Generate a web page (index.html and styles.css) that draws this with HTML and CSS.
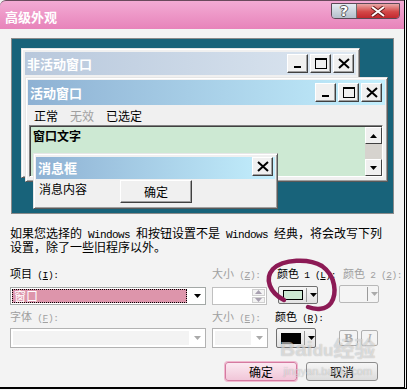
FILE: index.html
```html
<!DOCTYPE html>
<html>
<head>
    <title>高级外观</title>
    <link rel="stylesheet" href="styles.css">
</head>
<body>
<div class="dialog">
    <div class="caption">
        <span class="caption-title">高级外观</span>
        <div class="caption-btns">
            <span class="cap-help">?</span>
            <span class="cap-close">
                <svg width="16" height="11" viewBox="0 0 16 11"><path d="M2 1L14 10M14 1L2 10" stroke="#6b2020" stroke-width="4"/><path d="M2 1L14 10M14 1L2 10" stroke="#fff" stroke-width="2"/></svg>
            </span>
        </div>
    </div>

    <div class="content">
        <div class="preview">
            <div class="win win-inactive">
                <div class="bar bar-inactive">
                    <span>非活动窗口</span>
                    <div class="bar-btns">
                        <span class="cb"><svg width="12" height="11"><rect x="2" y="8" width="7" height="2"/></svg></span>
                        <span class="cb"><svg width="12" height="11"><path d="M0 0h12v11H0z M1 2v8h10V2z" fill-rule="evenodd"/></svg></span>
                        <span class="cb"><svg width="12" height="11"><path d="M1 1L11 10M11 1L1 10" stroke="#000" stroke-width="2"/></svg></span>
                    </div>
                </div>
            </div>

            <div class="win win-active">
                <div class="bar bar-active">
                    <span>活动窗口</span>
                    <div class="bar-btns">
                        <span class="cb"><svg width="12" height="11"><rect x="2" y="8" width="7" height="2"/></svg></span>
                        <span class="cb"><svg width="12" height="11"><path d="M0 0h12v11H0z M1 2v8h10V2z" fill-rule="evenodd"/></svg></span>
                        <span class="cb"><svg width="12" height="11"><path d="M1 1L11 10M11 1L1 10" stroke="#000" stroke-width="2"/></svg></span>
                    </div>
                </div>
                <div class="menu">
                    <span>正常</span>
                    <span class="dim">无效</span>
                    <span>已选定</span>
                </div>
                <div class="textwin">
                    <div class="wtext">窗口文字</div>
                    <div class="scroll">
                        <span class="sbtn"><svg width="7" height="4"><path d="M3.5 0L7 4H0z"/></svg></span>
                        <span class="track"></span>
                        <span class="sbtn"><svg width="7" height="4"><path d="M0 0h7L3.5 4z"/></svg></span>
                    </div>
                </div>
            </div>

            <div class="win win-msg">
                <div class="bar bar-active bar-msg">
                    <span>消息框</span>
                    <span class="cb"><svg width="12" height="11"><path d="M1 1L11 10M11 1L1 10" stroke="#000" stroke-width="2"/></svg></span>
                </div>
                <div class="msgbody">
                    <span class="msgtext">消息内容</span>
                    <span class="pbtn">确定</span>
                </div>
            </div>
        </div>

        <p class="note">如果您选择的<span class="hw"> Windows </span>和按钮设置不是<span class="hw"> Windows </span>经典，将会改写下列<br>设置，除了一些旧程序以外。</p>

        <div class="form">
            <span class="lbl">项目<span class="hw"> (<u>I</u>):</span></span>
            <span class="lbl off">大小<span class="hw"> (<u>Z</u>):</span></span>
            <span class="lbl c1">颜色<span class="hw"> 1 (<u>L</u>):</span></span>
            <span class="lbl off c2">颜色<span class="hw"> 2 (<u>2</u>):</span></span>

            <div class="combo">
                <span class="combo-sel">窗口</span>
                <span class="arrow"><svg width="7" height="4"><path d="M0 0h7L3.5 4z"/></svg></span>
            </div>
            <div class="spin">
                <span class="spin-field"></span>
                <span class="spin-btns">
                    <span><svg width="7" height="4"><path d="M3.5 0L7 4H0z" fill="#a8a0b0"/></svg></span>
                    <span><svg width="7" height="4"><path d="M0 0h7L3.5 4z" fill="#a8a0b0"/></svg></span>
                </span>
            </div>
            <div class="colorbtn cb1">
                <span class="swatch green"></span>
                <span class="sep"></span>
                <svg width="7" height="4"><path d="M0 0h7L3.5 4z"/></svg>
            </div>
            <div class="colorbtn cb2 disabled">
                <span class="swatch none"></span>
                <span class="sep"></span>
                <svg width="7" height="4"><path d="M0 0h7L3.5 4z" fill="#aaa"/></svg>
            </div>

            <span class="lbl off row2">字体<span class="hw"> (<u>F</u>):</span></span>
            <span class="lbl off row2">大小<span class="hw"> (<u>E</u>):</span></span>
            <span class="lbl row2 c3">颜色<span class="hw"> (<u>R</u>):</span></span>
            <span></span>

            <div class="combo off wide2">
                <span class="combo-field"></span>
                <span class="arrow"><svg width="7" height="4"><path d="M0 0h7L3.5 4z" fill="#aaa"/></svg></span>
            </div>
            <div class="combo off small2">
                <span class="combo-field"></span>
                <span class="arrow"><svg width="7" height="4"><path d="M0 0h7L3.5 4z" fill="#aaa"/></svg></span>
            </div>
            <div class="colorbtn cb3">
                <span class="swatch black"></span>
                <span class="sep"></span>
                <svg width="7" height="4"><path d="M0 0h7L3.5 4z"/></svg>
            </div>
            <div class="styles">
                <span class="sbox bold">B</span>
                <span class="sbox ital">I</span>
            </div>
        </div>

        <div class="actions">
            <span class="abtn ok">确定</span>
            <span class="abtn">取消</span>
        </div>
    </div>

    <svg class="mark" width="407" height="390" viewBox="0 0 407 390">
        <path d="M284 300 C270 293 264 279 273 269 C283 259 309 258 322 266 C336 276 337 294 331 303 C326 310 316 310 308 307" fill="none" stroke="#8c1a55" stroke-width="4.5" stroke-linecap="round"/>
    </svg>
    <div class="watermark">
        <span class="wm-big">Bai<span class="paw">du</span>经验</span>
        <span class="wm-small">jingyan.baidu.com</span>
    </div>
</div>
</body>
</html>
```

FILE: styles.css
```css
* {
    box-sizing: border-box;
}
body {
    margin: 0;
    background: #f3f3f3;
    font-family: "Noto Sans CJK SC", sans-serif;
    font-size: 12px;
    color: #000;
}
.dialog {
    position: relative;
    width: 407px;
    height: 389px;
    background: #f3f3f3;
    border-right: 3px double #000;
    border-bottom: 2px solid #000;
    overflow: hidden;
}

/* caption */
.caption {
    display: flex;
    justify-content: space-between;
    height: 29px;
    padding: 0 4px 0 5px;
    background: linear-gradient(#f3abd4, #e783ba);
    border-top: 1px solid #6a4a5c;
    border-radius: 6px 0 0 0;
}
.caption-title {
    color: #fff;
    font-weight: bold;
    font-size: 13px;
    line-height: 31px;
}
.caption-btns {
    display: flex;
    height: 16px;
    margin-top: 2px;
    border: 1px solid #5c4a56;
    border-radius: 0 0 4px 4px;
    overflow: hidden;
}
.cap-help {
    width: 25px;
    background: linear-gradient(#e6ecf2, #b3bfca);
    border-right: 1px solid #6d6d6d;
    color: #fff;
    font: bold 14px "DejaVu Sans", sans-serif;
    line-height: 14px;
    text-align: center;
    text-shadow: 1px 0 #555, -1px 0 #555, 0 1px #555, 0 -1px #555;
}
.cap-close {
    width: 42px;
    display: flex;
    align-items: center;
    justify-content: center;
    background: linear-gradient(#eaa9a8, #d44848 55%, #c2282f);
}

.content {
    padding: 9px 0 0 10px;
}

/* preview desktop */
.preview {
    position: relative;
    width: 383px;
    height: 176px;
    margin-left: 1px;
    background: #18637a;
    border: 1px solid #8a8a8a;
}
.win {
    position: absolute;
    background: #f0f0f0;
    border: 1px solid;
    border-color: #e6e6e6 #595959 #595959 #e6e6e6;
    box-shadow: inset 1px 1px #fff, inset -1px -1px #a0a0a0;
    padding: 2px;
}
.win-inactive {
    left: 9px;
    top: 9px;
    width: 339px;
    height: 130px;
    padding: 3px;
}
.win-active {
    left: 13px;
    top: 38px;
    width: 363px;
    height: 105px;
}
.win-msg {
    left: 21px;
    top: 114px;
    width: 245px;
    height: 56px;
    padding-top: 3px;
}
.bar {
    display: flex;
    align-items: center;
    justify-content: space-between;
    padding: 0 3px 0 2px;
    color: #fff;
    font-weight: bold;
    font-size: 13px;
}
.bar-inactive {
    height: 23px;
    padding-right: 2px;
    background: linear-gradient(90deg, #b8c8dc, #dde7f1);
}
.bar-active {
    height: 25px;
    background: linear-gradient(90deg, #8eb1d3, #c3effd);
}
.bar-msg {
    height: 22px;
    align-items: flex-start;
    padding-right: 2px;
}
.bar-msg > span:first-child {
    line-height: 22px;
}
.bar-btns {
    display: flex;
    gap: 2px;
}
.cb {
    display: flex;
    align-items: center;
    justify-content: center;
    width: 21px;
    height: 19px;
    background: #f0f0f0;
    border: 1px solid;
    border-color: #fff #404040 #404040 #fff;
    box-shadow: inset -1px -1px #a0a0a0;
}

.menu {
    display: flex;
    gap: 12px;
    height: 20px;
    align-items: center;
    padding-left: 6px;
}
.dim {
    color: #a0a0a0;
}
.textwin {
    display: flex;
    height: 52px;
    margin: 0 2px 0 1px;
    border: 1px solid;
    border-color: #808080 #fff #fff #808080;
    box-shadow: inset 1px 1px #404040;
    background: #cde9d3;
}
.wtext {
    flex: 1;
    padding: 2px 0 0 3px;
    font-weight: bold;
    line-height: 16px;
}
.scroll {
    display: flex;
    flex-direction: column;
    width: 17px;
    padding-top: 1px;
}
.sbtn {
    display: flex;
    align-items: center;
    justify-content: center;
    height: 17px;
    background: #f0f0f0;
    border: 1px solid;
    border-color: #fff #404040 #404040 #fff;
}
.track {
    flex: 1;
    background: #d6d3ce;
}

.msgbody {
    display: flex;
    align-items: flex-start;
    padding-left: 3px;
}
.msgtext {
    margin-top: 2px;
    line-height: 16px;
}
.pbtn {
    width: 72px;
    height: 23px;
    margin: 1px 0 0 33px;
    line-height: 21px;
    text-align: center;
    background: #f0f0f0;
    border: 1px solid;
    border-color: #fff #404040 #404040 #fff;
    box-shadow: inset -1px -1px #a0a0a0;
}

/* half-width latin text */
.hw {
    font-family: "Liberation Mono", monospace;
    font-size: 11px;
    letter-spacing: -0.6px;
}

.note {
    margin: 13px 0 0;
    line-height: 12px;
    white-space: nowrap;
}

/* form */
.form {
    display: grid;
    grid-template-columns: 202px 64px 63px 39px;
    grid-template-rows: 21px 18px 23px 20px;
    margin-top: 13px;
}
.lbl {
    font-size: 11px;
    line-height: 14px;
    white-space: nowrap;
}
.lbl .hw {
    font-size: 9.5px;
    letter-spacing: -0.4px;
}
.lbl.off {
    color: #a0a0a0;
}
.lbl.row2 {
    margin-top: 4px;
}
.c1 {
    margin-left: 1px;
}
.c2 {
    margin-left: 4px;
}
.c3 {
    margin-left: -1px;
}
.combo {
    display: flex;
    width: 196px;
    border: 1px solid #a3a8a6;
    background: #fff;
}
.combo-sel {
    flex: 1;
    margin: 1px 2px 1px 1px;
    padding-left: 2px;
    background: #dd95ab;
    outline: 1px dotted #000;
    outline-offset: -1px;
    color: #fff;
    line-height: 14px;
}
.arrow {
    width: 16px;
    display: flex;
    align-items: center;
    justify-content: center;
}
.combo.off {
    border-color: #b2b2b2;
}
.combo-field {
    flex: 1;
    margin: 2px 0 2px 2px;
    background: #f3f3f3;
}
.small2 {
    width: 56px;
}
.spin {
    display: flex;
    width: 55px;
    border: 1px solid #c0c0c0;
    background: #fff;
}
.spin-field {
    flex: 1;
}
.spin-btns {
    display: flex;
    flex-direction: column;
    width: 13px;
    margin: 1px;
    gap: 1px;
}
.spin-btns span {
    flex: 1;
    display: flex;
    align-items: center;
    justify-content: center;
    border: 1px solid #d0d0d0;
    background: #f3f3f3;
}
.colorbtn {
    display: flex;
    align-items: center;
    width: 40px;
    height: 18px;
    margin-top: -1px;
    padding-left: 4px;
    border: 1px solid #707070;
    border-radius: 2px;
    background: linear-gradient(#f6f6f6, #e2e2e2);
}
.cb1 {
    margin-left: 2px;
}
.cb3 {
    height: 20px;
    margin-top: 0;
}
.colorbtn.disabled {
    border-color: #b8b8b8;
    background: #f4f4f4;
    margin-top: -2px;
}
.swatch {
    width: 20px;
    height: 10px;
    border: 1px solid #000;
}
.green {
    background: #cde9d3;
}
.black {
    background: #000;
    height: 11px;
}
.none {
    border: none;
}
.sep {
    width: 1px;
    height: 14px;
    margin: 0 3px 0 3px;
    background: #9a9a9a;
}
.styles {
    display: flex;
    gap: 3px;
    padding-top: 2px;
}
.sbox {
    width: 19px;
    height: 16px;
    border: 1px solid #b0b0b0;
    border-radius: 2px;
    background: #f4f4f4;
    color: #a8a8a8;
    text-align: center;
    line-height: 14px;
    font-family: "Liberation Serif", serif;
    font-size: 13px;
}
.sbox.bold {
    font-weight: bold;
}
.sbox.ital {
    width: 17px;
    font-style: italic;
}

.actions {
    display: flex;
    justify-content: flex-end;
    gap: 9px;
    width: 368px;
    margin-top: 14px;
}
.abtn {
    width: 72px;
    height: 19px;
    line-height: 17px;
    text-align: center;
    border: 1px solid #8c8c8c;
    border-radius: 3px;
    background: linear-gradient(#f6f6f6, #dcdcdc);
}
.abtn.ok {
    border-color: #d47aa0;
    background: linear-gradient(#fbe9f1, #f1c6d8);
    box-shadow: 0 0 0 1px #f0b8cf;
}

/* overlays */
.mark {
    position: absolute;
    left: 0;
    top: 0;
    pointer-events: none;
}
.watermark {
    position: absolute;
    left: 280px;
    top: 336px;
    display: flex;
    flex-direction: column;
    align-items: center;
    color: rgba(255, 255, 255, 0.55);
    text-shadow: 0 0 1px rgba(0, 0, 0, 0.3);
    pointer-events: none;
}
.wm-big {
    font: bold 21px "Liberation Sans", "Noto Sans CJK SC", sans-serif;
    line-height: 26px;
}
.paw {
    font-size: 17px;
}
.wm-small {
    font: 11px "Liberation Sans", sans-serif;
    margin-top: 1px;
}
```
